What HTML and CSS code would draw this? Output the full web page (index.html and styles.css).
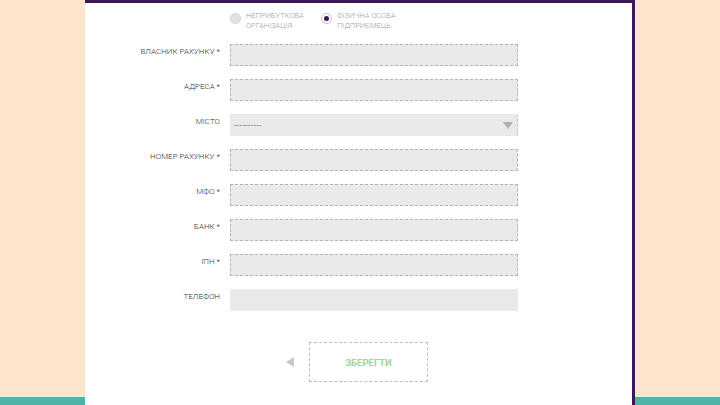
FILE: index.html
```html
<!DOCTYPE html>
<html lang="uk">
<head>
<meta charset="utf-8">
<title>Реквізити</title>
<link rel="stylesheet" href="styles.css">
</head>
<body>
<div class="page">
  <div class="card">
    <div class="radios">
      <label class="radio">
        <span class="dot"></span>
        <span class="rtext">НЕПРИБУТКОВА<br>ОРГАНІЗАЦІЯ</span>
      </label>
      <label class="radio">
        <span class="dot checked"></span>
        <span class="rtext">ФІЗИЧНА ОСОБА<br>ПІДПРИЄМЕЦЬ</span>
      </label>
    </div>
    <div class="form">
      <div class="label">ВЛАСНИК РАХУНКУ *</div>
      <div class="field"></div>
      <div class="label">АДРЕСА *</div>
      <div class="field"></div>
      <div class="label">МІСТО</div>
      <div class="field select"><span class="stext">----------</span><span class="arrow"></span></div>
      <div class="label">НОМЕР РАХУНКУ *</div>
      <div class="field"></div>
      <div class="label">МФО *</div>
      <div class="field"></div>
      <div class="label">БАНК *</div>
      <div class="field"></div>
      <div class="label">ІПН *</div>
      <div class="field"></div>
      <div class="label">ТЕЛЕФОН</div>
      <div class="field plain"></div>
    </div>
    <div class="actions">
      <span class="back"></span>
      <div class="save">ЗБЕРЕГТИ</div>
    </div>
  </div>
</div>
</body>
</html>
```
FILE: styles.css
```css
html, body {
  margin: 0;
  padding: 0;
}
body {
  width: 720px;
  height: 405px;
  overflow: hidden;
  font-family: Roboto, "Liberation Sans", sans-serif;
  background: linear-gradient(to bottom, #fde4cc 0, #fde4cc 396px, #e4eedd 396px, #e4eedd 397px, #4db4a6 397px);
}
.page {
  height: 405px;
  padding-left: 85px;
  display: flex;
}
.card {
  width: 547px;
  height: 402px;
  background: #fff;
  border-top: 3px solid #3c1758;
  border-right: 3px solid #3c1758;
  display: flex;
  flex-direction: column;
}
.radios {
  display: flex;
  padding-top: 8px;
  padding-left: 145px;
}
.radio {
  display: flex;
  align-items: flex-start;
  width: 91px;
}
.dot {
  width: 9px;
  height: 9px;
  border-radius: 50%;
  background: #e2e2e2;
  border: 1px solid #d3d3d3;
  margin-top: 2px;
  margin-right: 5px;
  flex: none;
  position: relative;
}
.dot.checked {
  background: #fff;
  border-color: #cdb8dc;
}
.dot.checked::after {
  content: "";
  position: absolute;
  left: 2px;
  top: 2px;
  width: 5px;
  height: 5px;
  border-radius: 50%;
  background: #3c1758;
}
.rtext {
  font-size: 7.5px;
  font-weight: 300;
  line-height: 9.5px;
  color: #a0a0a0;
}
.form {
  margin-top: 14px;
  display: grid;
  grid-template-columns: 135px 288px;
  column-gap: 10px;
  row-gap: 13px;
}
.label {
  text-align: right;
  font-size: 8px;
  font-weight: 300;
  line-height: 10px;
  padding-top: 3px;
  color: #333;
  white-space: nowrap;
}
.field {
  height: 20px;
  background: #e9eaec;
  border: 1px dashed #b4b4b4;
  display: flex;
  align-items: center;
  justify-content: space-between;
}
.field.select {
  border-color: #e9eaec #c0c0c0 #e9eaec #e9eaec;
}
.field.plain {
  border-color: #e9eaec;
}
.stext {
  font-size: 8px;
  color: #555;
  padding-left: 3px;
  letter-spacing: 0.6px;
}
.arrow {
  width: 0;
  height: 0;
  border-left: 5px solid transparent;
  border-right: 5px solid transparent;
  border-top: 7px solid #b0b0b0;
  margin-right: 4px;
}
.actions {
  display: flex;
  align-items: center;
  margin-top: 31px;
  padding-left: 201px;
}
.back {
  width: 0;
  height: 0;
  border-top: 5px solid transparent;
  border-bottom: 5px solid transparent;
  border-right: 8px solid #c8c8c8;
  margin-right: 15px;
}
.save {
  width: 117px;
  height: 38px;
  border: 1px dashed #bdbdbd;
  display: flex;
  align-items: center;
  justify-content: center;
  font-size: 9.5px;
  font-weight: 700;
  color: #9dd59c;
}
```
